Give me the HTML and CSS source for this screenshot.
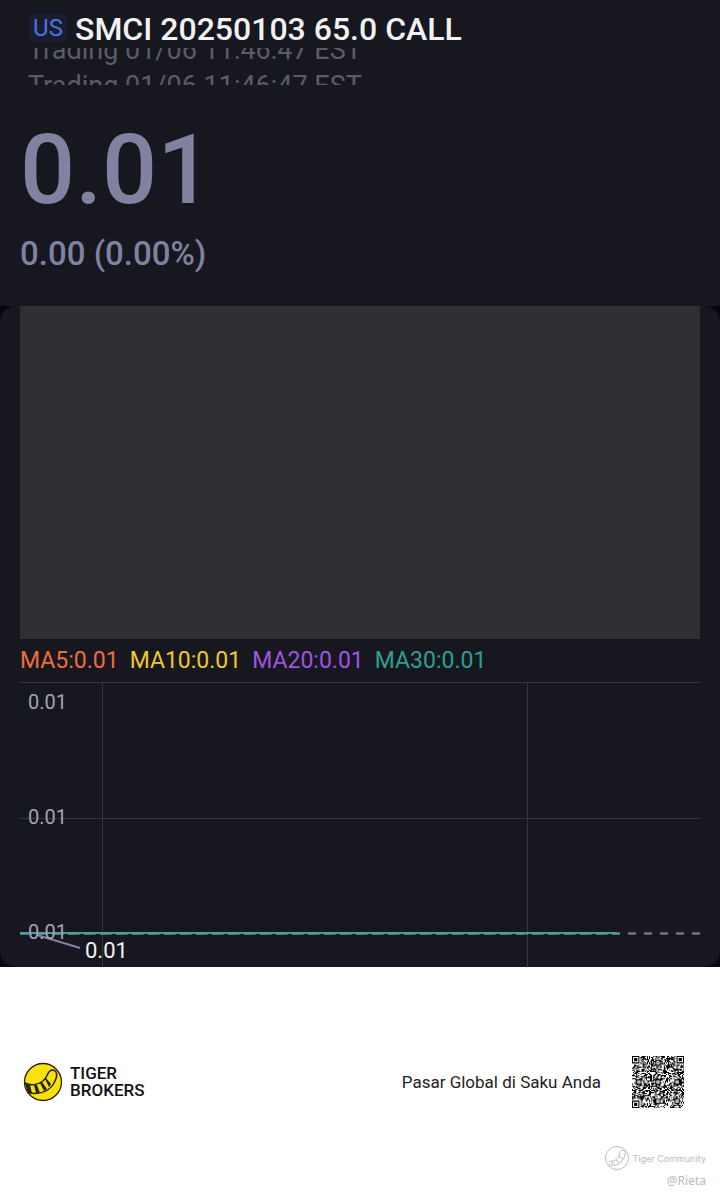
FILE: index.html
```html
<!DOCTYPE html>
<html lang="id">

<head>
    <meta charset="UTF-8">
    <meta name="viewport" content="width=device-width, initial-scale=1.0">
    <title>SMCI 20250103 65.0 CALL</title>
    <link rel="stylesheet" href="styles.css">
</head>

<body>
    <header class="quote">
        <div class="title">
            <span class="market">US</span>
            <h1>SMCI 20250103 65.0 CALL</h1>
        </div>
        <div class="ticker">
            <p>Trading 01/06 11:46:47 EST</p>
            <p>Trading 01/06 11:46:47 EST</p>
        </div>
        <div class="price">0.01</div>
        <div class="change">0.00 (0.00%)</div>
    </header>
    <main class="panel-wrap">
        <div class="panel">
            <div class="placeholder"></div>
            <div class="averages">
                <span class="ma5">MA5:0.01</span>
                <span class="ma10">MA10:0.01</span>
                <span class="ma20">MA20:0.01</span>
                <span class="ma30">MA30:0.01</span>
            </div>
            <svg class="chart" viewBox="0 0 680 285">
                <g class="grid">
                    <path d="M0 .5H680M0 136.5H680M82.5 0V285M507.5 0V285" />
                </g>
                <path class="last" d="M0 251.5H680" />
                <path class="line" d="M0 251H597" />
                <path class="overlay" d="M0 252H600" />
                <path class="pointer" d="M17 253L60 266" />
                <text class="axis" x="8" y="27">0.01</text>
                <text class="axis" x="8" y="142">0.01</text>
                <text class="axis" x="8" y="257">0.01</text>
                <text class="low" x="65" y="276">0.01</text>
            </svg>
        </div>
    </main>
    <footer>
        <div class="brand-row">
            <svg class="logo" viewBox="0 0 40 40">
                <circle cx="20" cy="20" r="18.5" fill="#fbe10c" stroke="#252006" stroke-width="1.3" />
                <path d="M2 21C7 24 15 23 20 19C25 15 24 9 29 8C34 8 35 13 32 19C28 28 19 33 6 31" fill="none" stroke="#252006" stroke-width="1.5" />
                <path d="M2 21L7 23L9 31L5 31ZM11 23L14 23L17 31L13 31ZM17 21L19 20L24 27L21 29ZM22 17L23 16L28 22L26 25Z" fill="#252006" />
            </svg>
            <div class="brand">TIGER<br>BROKERS</div>
            <p class="slogan">Pasar Global di Saku Anda</p>
            <svg class="qr" viewBox="0 0 49 49" role="img" aria-label="QR">
                <path id="modules" />
            </svg>
        </div>
        <div class="community">
            <svg viewBox="0 0 26 26">
                <circle cx="13" cy="13" r="11.5" />
                <path d="M5 16C9 17 13 15 15 11C16 8 16 5 19 5C23 6 21 13 17 17C13 21 9 21 5 19M8 16L9 19M12 15L15 18M15 11L19 14" />
            </svg>
            <span>Tiger Community</span>
        </div>
        <div class="author">@Rieta</div>
    </footer>
    <script src="qr.js"></script>
</body>

</html>
```
FILE: styles.css
```css
body {
    margin: 0;
    background-color: white;
    font-family: Roboto, sans-serif;
}

h1,
p {
    margin: 0;
}

.quote {
    padding-bottom: 8px;
    background-color: #16171f;
    color: #8082a0;
}

.title {
    display: flex;
    align-items: center;
    gap: 8px;
    height: 48px;
    padding: 0 29px;
}

.title h1 {
    padding-top: 10px;
    font-size: 32px;
    font-weight: 500;
    line-height: 38px;
    color: #f2f2f4;
}

.market {
    width: 38px;
    margin-top: 8px;
    border-radius: 3px;
    background-color: #1a1d31;
    color: #4a73dc;
    font-size: 24px;
    line-height: 28px;
    text-align: center;
}

/* two lines of the rolling status, both half out of view */
.ticker {
    display: flex;
    flex-direction: column;
    justify-content: center;
    box-sizing: border-box;
    height: 37px;
    padding: 3px 28px 0;
    overflow: hidden;
    color: #5c5c68;
    font-size: 27px;
    line-height: 36px;
}

.price {
    padding: 27px 20px 0;
    font-size: 97px;
    font-weight: 500;
    line-height: 116px;
}

.change {
    padding: 6px 20px 24px;
    font-size: 33px;
    font-weight: 500;
    line-height: 40px;
}

.panel-wrap {
    background-color: #08080c;
}

.panel {
    padding: 0 20px;
    border-radius: 16px;
    background-color: #16171f;
    overflow: hidden;
}

.placeholder {
    height: 333px;
    background-color: #2f3034;
}

.averages {
    display: flex;
    gap: 11px;
    font-size: 23px;
    line-height: 43px;
}

.ma5 {
    color: #f06c3c;
}

.ma10 {
    color: #ecc92c;
}

.ma20 {
    color: #a055e0;
}

.ma30 {
    color: #2f9f92;
}

.chart {
    display: block;
    width: 100%;
}

.chart path {
    fill: none;
}

.grid {
    stroke: #36363c;
}

.chart .last {
    stroke: #898994;
    stroke-width: 2;
    stroke-dasharray: 8;
}

.chart .line {
    stroke: #3aa398;
    stroke-width: 2;
}

.chart .overlay {
    stroke: #7c9299;
    stroke-dasharray: 12 4;
}

.chart .pointer {
    stroke: #8082a0;
    stroke-width: 2;
}

.axis {
    fill: #a3a3b5;
    font-size: 20px;
}

.low {
    fill: #f2f2f4;
    font-size: 22px;
}

footer {
    padding: 85px 14px 6px 23px;
}

.brand-row {
    display: flex;
    align-items: center;
    height: 60px;
    padding-right: 22px;
}

.logo {
    width: 40px;
    height: 40px;
}

.brand {
    margin-left: 7px;
    color: #111;
    font-size: 17px;
    font-weight: 500;
    line-height: 17px;
}

.slogan {
    margin-left: auto;
    color: #222;
    font-size: 17px;
}

.qr {
    width: 52px;
    height: 52px;
    margin-left: 31px;
}

.community {
    display: flex;
    align-items: center;
    justify-content: flex-end;
    gap: 3px;
    margin-top: 33px;
    color: #bbb;
    font-family: Inter, sans-serif;
    font-size: 9px;
}

.community svg {
    width: 26px;
    height: 26px;
    fill: none;
    stroke: #bbb;
}

.author {
    color: #bbb;
    font-family: "Noto Sans", sans-serif;
    font-size: 12px;
    line-height: 20px;
    text-align: right;
}
```
FILE: qr.js
```js
const SIZE = 49;
const finders = [[3, 3], [45, 3], [3, 45]];
const aligns = [[24, 6], [6, 24], [24, 24], [42, 24], [24, 42], [42, 42]];
let seed = 20250103;

function random() {
    seed = (seed * 1103515245 + 12345) % 2147483648;
    return seed / 2147483648;
}

// rings round the finder and alignment centres, noise everywhere else
function isDark(x, y) {
    const noise = random() < 0.5;
    for (const [cx, cy] of finders) {
        const d = Math.max(Math.abs(x - cx), Math.abs(y - cy));
        if (d <= 4)
            return d < 2 || d == 3;
    }
    for (const [cx, cy] of aligns) {
        const d = Math.max(Math.abs(x - cx), Math.abs(y - cy));
        if (d <= 2)
            return d != 1;
    }
    if (x == 6 || y == 6)
        return (x + y) % 2 == 0;
    return noise;
}

let d = "";
for (let y = 0; y < SIZE; y++)
    for (let x = 0; x < SIZE; x++)
        if (isDark(x, y))
            d += `M${x} ${y}h1v1h-1z`;
document.getElementById("modules").setAttribute("d", d);
```
